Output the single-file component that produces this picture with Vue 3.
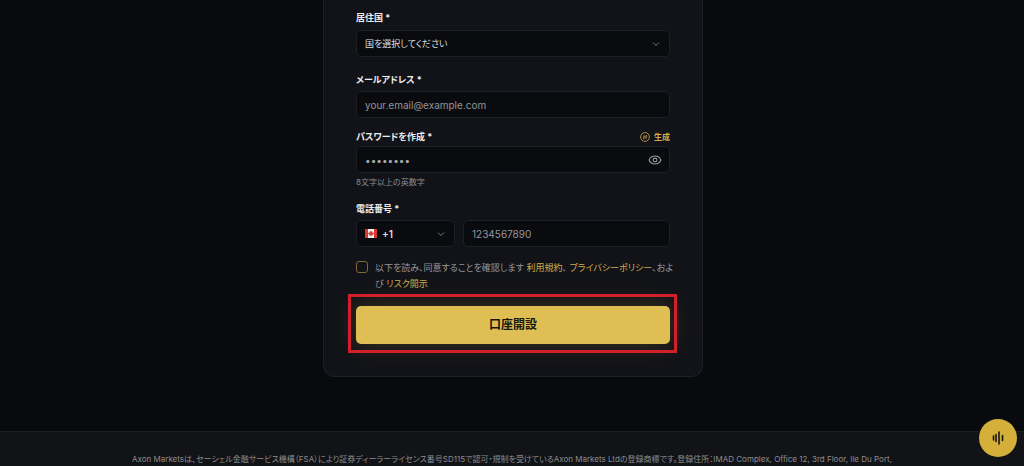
<script setup>
import { ref } from 'vue'

const country = ref('')
const email = ref('')
const password = ref('')
const dialCode = ref('+1')
const phone = ref('')
const agreed = ref(false)
const showPassword = ref(false)
</script>

<template>
  <div class="page">
    <main class="main">
      <form class="card" @submit.prevent>
        <div class="field">
          <label class="label" for="country">居住国 *</label>
          <div class="control">
            <select id="country" v-model="country" class="input">
              <option value="">国を選択してください</option>
            </select>
            <svg class="chevron" viewBox="0 0 8 8" aria-hidden="true"><path d="M1 2.5 4 5.5 7 2.5" /></svg>
          </div>
        </div>

        <div class="field email">
          <label class="label" for="email">メールアドレス *</label>
          <input id="email" v-model="email" class="input" type="email" placeholder="your.email@example.com">
        </div>

        <div class="field password">
          <div class="label-row">
            <label class="label" for="password">パスワードを作成 *</label>
            <button class="generate" type="button">
              <svg viewBox="0 0 10 10" aria-hidden="true">
                <circle cx="5" cy="5" r="4.4" />
                <path d="M3 4.2h4L6 3.2M7 5.9H3l1 1" />
              </svg>
              生成
            </button>
          </div>
          <div class="control">
            <input
              id="password" v-model="password" class="input strong-placeholder"
              :type="showPassword ? 'text' : 'password'" placeholder="••••••••"
            >
            <button class="eye" type="button" aria-label="パスワードを表示" @click="showPassword = !showPassword">
              <svg viewBox="0 0 14 10" aria-hidden="true">
                <path d="M1 5C2.3 2.3 4.4 1 7 1s4.700 1.300 6 4c-1.300 2.700-3.400 4-6 4S2.300 7.700 1 5Z" />
                <circle cx="7" cy="5" r="1.900" />
              </svg>
            </button>
          </div>
          <p class="hint">8文字以上の英数字</p>
        </div>

        <div class="field phone">
          <label class="label" for="phone">電話番号 *</label>
          <div class="phone-row">
            <div class="control">
              <svg class="flag" viewBox="0 0 24 18" aria-hidden="true">
                <rect width="24" height="18" fill="#f4eeee" />
                <path d="M0 0h6v18H0zM18 0h6v18h-6z" fill="#d8382f" />
                <path d="m12 3 1.300 2.400 1.300-.7-.5 3.200 1.600-1.500.4 1 1.700-.2-.7 1.900.8.600-3.100 2.400.3 1.100-2.700-.4V15h-.8v-2.200l-2.700.4.300-1.100-3.100-2.400.8-.6-.7-1.900 1.700.2.400-1 1.600 1.500-.5-3.200 1.300.7z" fill="#d8382f" />
              </svg>
              <select v-model="dialCode" class="input dial" aria-label="国番号">
                <option>+1</option>
              </select>
              <svg class="chevron" viewBox="0 0 8 8" aria-hidden="true"><path d="M1 2.5 4 5.500 7 2.500" /></svg>
            </div>
            <input id="phone" v-model="phone" class="input" type="tel" placeholder="1234567890">
          </div>
        </div>

        <div class="consent">
          <input id="agree" v-model="agreed" class="check" type="checkbox">
          <label for="agree">以下を読み、同意することを確認します <a href="#terms">利用規約</a>、 <a href="#privacy">プライバシーポリシー</a>、およ<br>び <a href="#risk">リスク開示</a></label>
        </div>

        <div class="submit-wrap">
          <button class="submit" type="submit">口座開設</button>
        </div>
      </form>
    </main>

    <footer class="footer">
      <p>Axon Marketsは、セーシェル金融サービス機構（FSA）により証券ディーラーライセンス番号SD115で認可・規制を受けているAxon Markets Ltdの登録商標です。登録住所：IMAD Complex, Office 12, 3rd Floor, Ile Du Port,</p>
    </footer>

    <button class="voice" type="button" aria-label="音声アシスタント">
      <svg viewBox="0 0 14 14" aria-hidden="true"><path d="M2.500 5v4M5 3.500v7M8 1v12M11.500 4.500v5" /></svg>
    </button>
  </div>
</template>

<style>
body {
  margin: 0;
  background: #090a0e;
}
</style>

<style scoped>
* {
  box-sizing: border-box;
}

.page {
  position: relative;
  display: flex;
  flex-direction: column;
  min-height: 100vh;
  color: #ededee;
  font-family: Inter, "Noto Sans CJK JP", sans-serif;
  font-size: 10px;
  line-height: 16px;
  font-feature-settings: "palt";
}

button,
input,
select {
  font: inherit;
  font-feature-settings: inherit;
}

.main {
  flex: none;
  padding: 0 0 54px 2px;
}

.card {
  width: 100%;
  max-width: 380px;
  margin: 0 auto;
  padding: 10px 32px 32px;
  border: 1px solid #1f2024;
  border-top: 0;
  border-radius: 0 0 12px 12px;
  background: #121318;
}

.field {
  display: flex;
  flex-direction: column;
  gap: 4px;
}

.label {
  font-size: 9px;
  font-weight: 700;
}

.control {
  position: relative;
}

.input {
  display: block;
  width: 100%;
  min-width: 0;
  height: 27px;
  margin: 0;
  padding: 0 8px;
  border: 1px solid #1e1f24;
  border-radius: 5px;
  background: #0a0b0f;
  color: #dededf;
  outline: none;
  appearance: none;
}

select.input {
  font-size: 9px;
}

.input::placeholder {
  color: #94959a;
  opacity: 1;
}

.strong-placeholder::placeholder {
  color: #a9aaad;
}

.chevron {
  position: absolute;
  top: 10px;
  right: 10px;
  width: 8px;
  height: 8px;
  fill: none;
  stroke: #7a7b80;
  pointer-events: none;
}

.email {
  margin-top: 15px;
  gap: 3px;
}

.password {
  margin-top: 11px;
  gap: 1px;
}

.label-row {
  display: flex;
  justify-content: space-between;
}

.generate {
  display: flex;
  align-items: center;
  gap: 4px;
  padding: 0;
  border: 0;
  background: none;
  color: #d3ab4d;
  font-size: 8px;
  font-weight: 700;
}

.generate svg {
  width: 10px;
  height: 10px;
  fill: none;
  stroke: currentColor;
  stroke-width: 0.8;
}

.eye {
  position: absolute;
  top: 8px;
  right: 8px;
  display: flex;
  padding: 0;
  border: 0;
  background: none;
}

.eye svg {
  width: 14px;
  height: 12px;
  fill: none;
  stroke: #97989c;
  stroke-width: 1.1;
}

.hint {
  margin: 0;
  padding-top: 2px;
  color: #8b8c91;
  font-size: 8px;
  line-height: 12px;
}

.phone {
  margin-top: 13px;
  gap: 3px;
}

.phone-row {
  display: grid;
  grid-template-columns: 99px 1fr;
  gap: 8px;
}

.flag {
  position: absolute;
  top: 9px;
  left: 9px;
  width: 12px;
  height: 9px;
}

select.dial {
  padding-left: 25px;
  font-size: 10px;
  font-weight: 600;
}

.consent {
  display: flex;
  align-items: flex-start;
  gap: 7px;
  margin-top: 13px;
  color: #96979b;
  font-size: 9px;
  white-space: nowrap;
}

.check {
  flex: none;
  width: 12px;
  height: 12px;
  margin: 1px 0 0;
  border: 1px solid #7e6b3b;
  border-radius: 3px;
  background: #121318;
  appearance: none;
}

.check:checked {
  background: #dfbf53;
}

a {
  color: #d3ab4d;
  text-decoration: none;
}

.submit-wrap {
  position: relative;
  margin-top: 14px;
}

.submit-wrap::after {
  content: "";
  position: absolute;
  inset: -12px -7px -9px -8px;
  border: 3px solid #d31f2a;
  pointer-events: none;
}

.submit {
  display: block;
  width: 100%;
  height: 38px;
  padding: 0;
  border: 0;
  border-radius: 5px;
  background: #dfbf53;
  box-shadow: 0 0 24px rgba(223, 191, 83, 0.2);
  color: #17150e;
  font-size: 12px;
  font-weight: 700;
}

.footer {
  flex: 1;
  padding: 20px 120px 0;
  border-top: 1px solid #1e1f23;
  background: #121316;
  color: #8b8c90;
  font-size: 8px;
  line-height: 14px;
  text-align: center;
}

.footer p {
  margin: 0;
}

.voice {
  position: absolute;
  right: 7px;
  bottom: 9px;
  display: grid;
  place-items: center;
  width: 38px;
  height: 38px;
  padding: 0;
  border: 0;
  border-radius: 50%;
  background: #d4b03a;
}

.voice svg {
  width: 14px;
  height: 14px;
  fill: none;
  stroke: #17150e;
  stroke-width: 1.6;
  stroke-linecap: round;
}
</style>
